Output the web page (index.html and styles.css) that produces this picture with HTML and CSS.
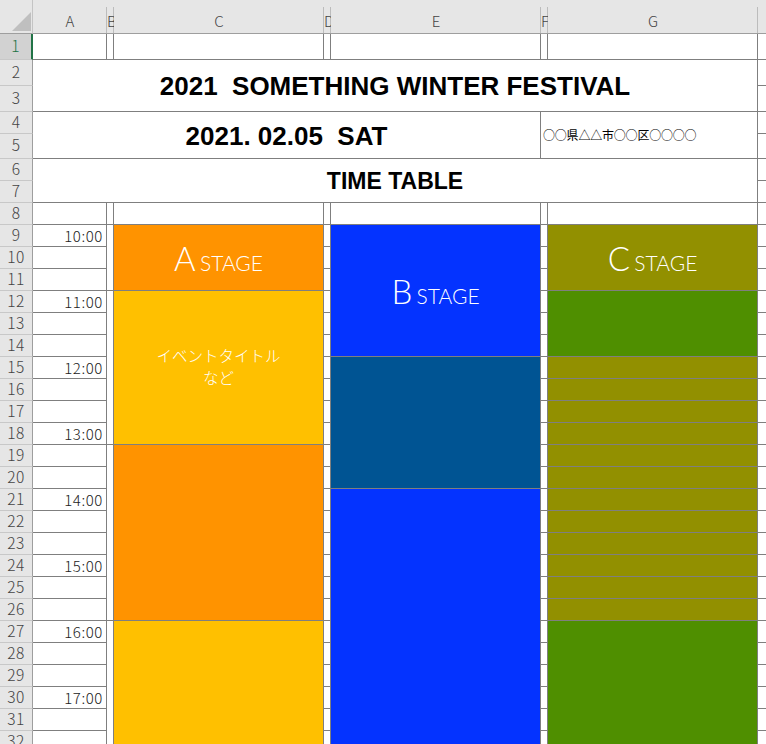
FILE: index.html
```html
<!DOCTYPE html>
<html lang="ja">
<head>
<meta charset="utf-8">
<title>TIME TABLE</title>
<link rel="stylesheet" href="styles.css">
</head>
<body>
<div class="sheet">
  <div class="corner"><i class="tri"></i></div>
  <div class="ch">A</div><div class="ch">B</div><div class="ch">C</div><div class="ch">D</div><div class="ch">E</div><div class="ch">F</div><div class="ch">G</div><div class="ch last"></div>

  <div class="rh sel">1</div><div class="cell"></div><div class="cell"></div><div class="cell"></div><div class="cell"></div><div class="cell"></div><div class="cell"></div><div class="cell"></div><div class="edge"></div>
  <div class="rh">2</div><div class="cell c7 r2 title">2021  SOMETHING WINTER FESTIVAL</div><div class="edge"></div>
  <div class="rh">3</div><div class="edge"></div>
  <div class="rh">4</div><div class="cell c5 r2 date">2021. 02.05  SAT</div><div class="cell c2 r2 addr">○○県△△市○○区○○○○</div><div class="edge"></div>
  <div class="rh">5</div><div class="edge"></div>
  <div class="rh">6</div><div class="cell c7 r2 tt">TIME TABLE</div><div class="edge"></div>
  <div class="rh">7</div><div class="edge"></div>
  <div class="rh">8</div><div class="cell"></div><div class="cell"></div><div class="cell"></div><div class="cell"></div><div class="cell"></div><div class="cell"></div><div class="cell"></div><div class="edge"></div>

  <div class="rh">9</div><div class="cell time">10:00</div><div class="cell r3"></div>
  <div class="cell r3 orange stage"><p class="lbl"><span class="big">A</span> <span class="small">STAGE</span></p></div>
  <div class="cell"></div>
  <div class="cell r6 blue stage"><p class="lbl"><span class="big">B</span> <span class="small">STAGE</span></p></div>
  <div class="cell"></div>
  <div class="cell r3 olive stage"><p class="lbl"><span class="big">C</span> <span class="small">STAGE</span></p></div>
  <div class="edge"></div>
  <div class="rh">10</div><div class="cell time"></div><div class="cell"></div><div class="cell"></div><div class="edge"></div>
  <div class="rh">11</div><div class="cell time"></div><div class="cell"></div><div class="cell"></div><div class="edge"></div>

  <div class="rh">12</div><div class="cell time">11:00</div><div class="cell r7"></div>
  <div class="cell r7 yellow event"><p>イベントタイトル<br>など</p></div>
  <div class="cell"></div><div class="cell"></div><div class="cell r3 green"></div><div class="edge"></div>
  <div class="rh">13</div><div class="cell time"></div><div class="cell"></div><div class="cell"></div><div class="edge"></div>
  <div class="rh">14</div><div class="cell time"></div><div class="cell"></div><div class="cell"></div><div class="edge"></div>

  <div class="rh">15</div><div class="cell time">12:00</div><div class="cell"></div><div class="cell r6 ocean"></div><div class="cell"></div><div class="cell olive"></div><div class="edge"></div>
  <div class="rh">16</div><div class="cell time"></div><div class="cell"></div><div class="cell"></div><div class="cell olive"></div><div class="edge"></div>
  <div class="rh">17</div><div class="cell time"></div><div class="cell"></div><div class="cell"></div><div class="cell olive"></div><div class="edge"></div>
  <div class="rh">18</div><div class="cell time">13:00</div><div class="cell"></div><div class="cell"></div><div class="cell olive"></div><div class="edge"></div>

  <div class="rh">19</div><div class="cell time"></div><div class="cell r8"></div><div class="cell r8 orange"></div><div class="cell"></div><div class="cell"></div><div class="cell olive"></div><div class="edge"></div>
  <div class="rh">20</div><div class="cell time"></div><div class="cell"></div><div class="cell"></div><div class="cell olive"></div><div class="edge"></div>
  <div class="rh">21</div><div class="cell time">14:00</div><div class="cell"></div><div class="cell r12 blue"></div><div class="cell"></div><div class="cell olive"></div><div class="edge"></div>
  <div class="rh">22</div><div class="cell time"></div><div class="cell"></div><div class="cell"></div><div class="cell olive"></div><div class="edge"></div>
  <div class="rh">23</div><div class="cell time"></div><div class="cell"></div><div class="cell"></div><div class="cell olive"></div><div class="edge"></div>
  <div class="rh">24</div><div class="cell time">15:00</div><div class="cell"></div><div class="cell"></div><div class="cell olive"></div><div class="edge"></div>
  <div class="rh">25</div><div class="cell time"></div><div class="cell"></div><div class="cell"></div><div class="cell olive"></div><div class="edge"></div>
  <div class="rh">26</div><div class="cell time"></div><div class="cell"></div><div class="cell"></div><div class="cell olive"></div><div class="edge"></div>

  <div class="rh">27</div><div class="cell time">16:00</div><div class="cell r6"></div><div class="cell r6 yellow"></div><div class="cell"></div><div class="cell"></div><div class="cell r6 green"></div><div class="edge"></div>
  <div class="rh">28</div><div class="cell time"></div><div class="cell"></div><div class="cell"></div><div class="edge"></div>
  <div class="rh">29</div><div class="cell time"></div><div class="cell"></div><div class="cell"></div><div class="edge"></div>
  <div class="rh">30</div><div class="cell time">17:00</div><div class="cell"></div><div class="cell"></div><div class="edge"></div>
  <div class="rh">31</div><div class="cell time"></div><div class="cell"></div><div class="cell"></div><div class="edge"></div>
  <div class="rh">32</div><div class="cell time"></div><div class="cell"></div><div class="cell"></div><div class="edge"></div>
</div>
</body>
</html>
```

FILE: styles.css
```css
* { box-sizing: border-box; margin: 0; padding: 0; }
html, body { width: 766px; height: 744px; overflow: hidden; background: #fff; }
body { font-family: "Noto Sans CJK JP", "Noto Sans", sans-serif; color: #000; }

.sheet {
  display: grid;
  grid-template-columns: 33px 74px 7px 210px 7px 210px 7px 210px 1fr;
  grid-template-rows: 34px 26px 26px 26px 22px 25px 22px 22px 22px repeat(24, 22px);
}

/* headers */
.corner {
  background: #e6e6e6;
  border-right: 1px solid #c4c4c4;
  border-bottom: 1px solid #9e9e9e;
  display: flex;
  align-items: flex-end;
  justify-content: flex-end;
  padding: 0 1px 2px 0;
}
.tri {
  display: block;
  width: 19px;
  height: 19px;
  background: #bfbfbf;
  clip-path: polygon(100% 0, 100% 100%, 0 100%);
}
.ch {
  background: linear-gradient(#bcbcbc, #bcbcbc) right bottom / 1px 26px no-repeat, #e6e6e6;
  border-bottom: 1px solid #9e9e9e;
  padding-top: 8px;
  text-align: center;
  line-height: 25px;
  font-size: 15px;
  font-weight: 300;
  color: #444;
  overflow: hidden;
  white-space: nowrap;
}
.ch.last { background: #e6e6e6; }
.rh {
  background: #e6e6e6;
  border-right: 1px solid #9e9e9e;
  border-bottom: 1px solid #c8c8c8;
  display: flex;
  align-items: center;
  justify-content: center;
  padding-bottom: 2px;
  font-size: 15.5px;
  font-weight: 300;
  letter-spacing: 0.4px;
  line-height: 1;
  color: #444;
}
.rh.sel {
  background: #d2d2d2;
  color: #217346;
  border-right: 2px solid #217346;
}

/* cells */
.cell {
  border-right: 1px solid #7f7f7f;
  border-bottom: 1px solid #7f7f7f;
  background: #fff;
}
.edge { border-bottom: 1px solid #7f7f7f; }

.c7 { grid-column: span 7; }
.c5 { grid-column: span 5; }
.c2 { grid-column: span 2; }
.r2 { grid-row: span 2; }
.r3 { grid-row: span 3; }
.r6 { grid-row: span 6; }
.r7 { grid-row: span 7; }
.r8 { grid-row: span 8; }
.r12 { grid-row: span 12; }

.title, .date, .tt {
  display: flex;
  align-items: center;
  justify-content: center;
  font-family: "Liberation Sans", Arial, sans-serif;
  font-weight: bold;
  white-space: pre;
  line-height: 1;
}
.title { font-size: 26px; padding-top: 1px; }
.date { font-size: 26px; padding-top: 2px; }
.tt { font-size: 23px; padding-top: 1px; }
.addr {
  display: flex;
  align-items: center;
  padding-left: 2px;
  font-size: 12px;
  line-height: 1;
  letter-spacing: -0.2px;
}

.time {
  display: flex;
  align-items: flex-end;
  justify-content: flex-end;
  padding: 0 3px 3px 0;
  font-size: 15px;
  font-weight: 300;
  letter-spacing: 0.6px;
  line-height: 1;
  color: #222;
}

/* fills */
.orange { background: #ff9300; }
.yellow { background: #ffc000; }
.blue { background: #0433ff; }
.ocean { background: #005493; }
.olive { background: #929000; }
.green { background: #4f8f00; }

.stage {
  display: flex;
  align-items: center;
  justify-content: center;
  color: #fff;
}
.lbl {
  font-family: Lato, "Open Sans", sans-serif;
  font-weight: 300;
  line-height: 1;
  white-space: nowrap;
  padding-top: 2px;
}
.big { font-size: 33px; }
.small { font-size: 21px; }

.event {
  display: flex;
  align-items: center;
  justify-content: center;
  color: #fff;
  text-align: center;
  font-size: 15.5px;
  font-weight: 300;
  line-height: 22px;
  padding-bottom: 3px;
}
```
